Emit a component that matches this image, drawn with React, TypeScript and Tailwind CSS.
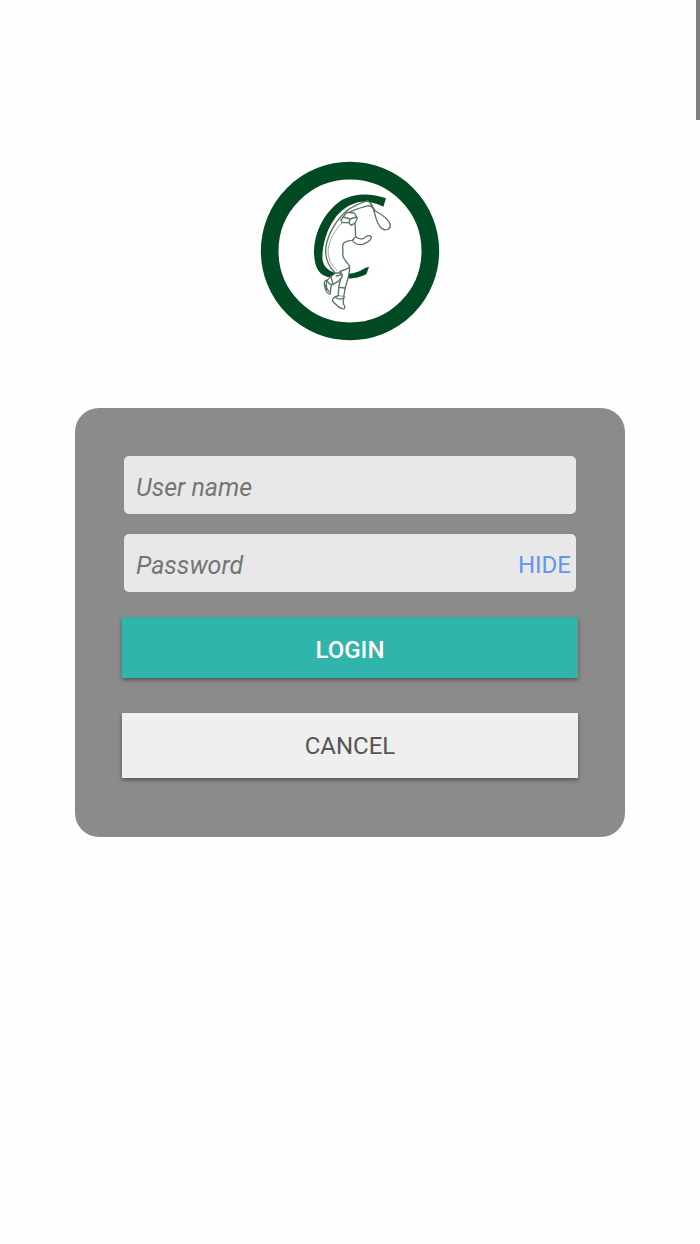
import { useState } from "react"
import type { FormEvent } from "react"

const FIELD =
  "block h-[58px] w-full rounded-[5px] bg-[#e8e8e8] pl-3 pt-1 text-[25px] text-[#333] outline-none placeholder:italic placeholder:text-[#757575]"

const SHADOW = "shadow-[0_2px_4px_rgba(0,0,0,0.4)]"

function Logo() {
  return (
    <svg viewBox="0 0 600 600" className="size-[200px]" role="img" aria-label="Tennis club">
      <circle cx="300" cy="303" r="241" fill="#fff" stroke="#014a23" strokeWidth="53" />

      {/* crescent behind the player */}
      <path
        d="M408 145 L400 170 C370 156 340 151 315 160 C290 168 268 186 254 206 C230 238 217 285 217 325 C219 350 235 364 260 370 L245 382 C211 382 193 357 192 307 C192 241 228 184 268 155 C309 128 361 129 408 145 Z"
        fill="#014a23"
      />
      <path
        d="M294 371 C315 371 334 362 345 354 L357 350 L349 373 C334 381 313 386 290 386 Z"
        fill="#014a23"
      />

      <g fill="none" stroke="#5a7363" strokeWidth="4" strokeLinejoin="round" strokeLinecap="round">
        {/* raised arm and racket */}
        <path d="M290 183 C308 168 329 160 353 152 L362 160 L368 172 L357 167 C340 170 320 177 297 187" />
        <path d="M362 161 C368 172 372 180 374 190 C379 212 386 228 396 236 C409 244 421 238 421 226 C418 209 397 194 376 183 L362 161" />
        {/* head and cap */}
        <path d="M273 210 L290 187 L313 189 L322 204 L315 219 L304 226 L296 218 L276 218 Z" />
        <path d="M280 201 L300 207 L320 201 M300 207 L297 218" />
        {/* body */}
        <path d="M315 221 L317 260 L308 270 C299 274 285 272 280 281 C275 291 281 304 278 316 C281 329 293 339 299 348 L297 355 L270 365" />
        <path d="M290 183 C261 207 234 251 228 290 C224 322 233 346 254 367" />
        <path d="M276 218 C255 240 239 268 235 295 C232 322 241 345 262 362" stroke="#9baca1" strokeWidth="3" />
        <path d="M317 260 C325 269 333 268 342 265 C348 258 357 254 364 260 C366 269 356 275 345 280 C337 285 323 286 315 279 C310 277 308 274 308 270" />
        {/* legs */}
        <path
          d="M270 365 L299 353 C299 374 290 396 285 417 L281 441 L264 441 L267 407 L276 374 Z"
          fill="#fff"
        />
        <path d="M268 412 L284 414 M264 438 L282 440" />
        <path
          d="M257 369 L274 369 L277 379 L265 394 L247 404 L239 402 L231 392 L242 380 Z"
          fill="#fff"
        />
        <path d="M243 381 L249 402 M259 378 L272 375" />
        {/* shoes */}
        <path d="M231 390 C222 391 221 402 225 412 C227 423 233 433 240 432 C244 424 239 412 246 404 M231 393 C227 404 230 417 237 425 M226 407 L232 420" />
        <path
          d="M264 438 C254 440 247 446 247 453 C256 460 262 472 276 476 C285 479 287 471 281 463 C276 456 282 448 282 440 M258 443 C263 449 272 448 281 444"
          fill="#fff"
        />
      </g>
    </svg>
  )
}

export default function App() {
  const [visible, setVisible] = useState(true)

  const handleSubmit = (e: FormEvent) => e.preventDefault()

  return (
    <main className="relative min-h-screen bg-[#fefefe] px-[75px] pt-[150px] font-['Roboto',sans-serif]">
      {/* scroll thumb */}
      <div className="absolute right-0 top-0 h-[120px] w-1 bg-[#808080]" />

      <div className="flex justify-center">
        <Logo />
      </div>

      <form
        onSubmit={handleSubmit}
        className="mt-[58px] rounded-3xl bg-[#8b8b8b] px-[47px] pb-[59px] pt-12"
      >
        <div className="mx-0.5 flex flex-col gap-5">
          <input type="text" aria-label="User name" placeholder="User name" className={FIELD} />

          <div className="relative">
            <input
              type={visible ? "text" : "password"}
              aria-label="Password"
              placeholder="Password"
              className={FIELD}
            />
            <button
              type="button"
              onClick={() => setVisible((v) => !v)}
              className="absolute inset-y-0 right-[5px] pt-1 text-2xl text-[#6495ed]"
            >
              {visible ? "HIDE" : "SHOW"}
            </button>
          </div>
        </div>

        <button
          type="submit"
          className={`mt-[25px] block h-[61px] w-full bg-[#2fb5aa] pt-1 text-2xl font-medium text-white ${SHADOW}`}
        >
          LOGIN
        </button>
        <button
          type="button"
          className={`mt-[35px] block h-[65px] w-full bg-[#efefef] text-2xl text-[#555] ${SHADOW}`}
        >
          CANCEL
        </button>
      </form>
    </main>
  )
}
